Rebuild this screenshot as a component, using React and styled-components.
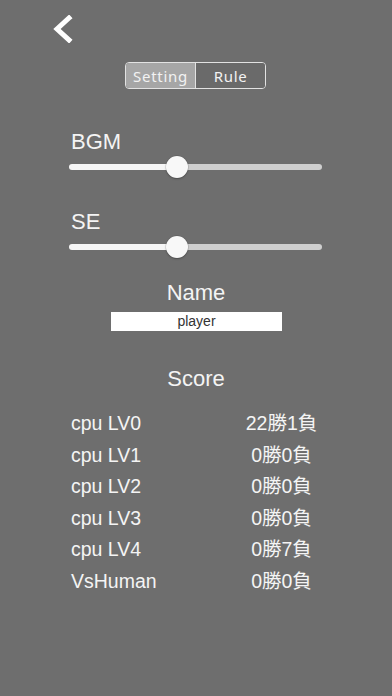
import React from 'react';
import styled, { createGlobalStyle } from 'styled-components';

const GlobalStyle = createGlobalStyle`
  html, body {
    margin: 0;
    padding: 0;
    background: #6e6e6e;
  }
  body {
    font-family: "Liberation Sans", "Noto Sans CJK JP", sans-serif;
    color: #f4f4f4;
  }
`;

const Screen = styled.div`
  width: 392px;
  height: 696px;
  display: flex;
  flex-direction: column;
  box-sizing: border-box;
`;

const BackButton = styled.button`
  align-self: flex-start;
  margin: 15px 0 0 52px;
  padding: 0;
  width: 22px;
  height: 28px;
  border: none;
  background: none;
  display: flex;
`;

const TabBar = styled.div`
  align-self: center;
  margin-top: 19px;
  margin-left: -1px;
  display: flex;
  width: 141px;
  height: 27px;
  border: 1.5px solid #e2e2e2;
  border-radius: 4px;
  box-sizing: border-box;
  overflow: hidden;
`;

const Tab = styled.div`
  flex: 1;
  display: flex;
  align-items: center;
  justify-content: center;
  font-family: "Noto Sans", "Open Sans", sans-serif;
  font-size: 15px;
  letter-spacing: 0.7px;
  color: #f2f2f2;
  background: ${p => (p.$active ? '#a6a6a6' : '#6a6a6a')};
  border-left: ${p => (p.$first ? 'none' : '1.5px solid #e2e2e2')};
`;

const SliderGroup = styled.div`
  display: flex;
  flex-direction: column;
  padding: 0 70px 0 69px;
  margin-top: ${p => p.$top}px;
`;

const Label = styled.div`
  font-size: 22px;
  line-height: 24px;
  padding-left: 2px;
`;

const Slider = styled.div`
  position: relative;
  margin-top: 2px;
  height: 22px;
  display: flex;
  align-items: center;
`;

const Track = styled.div`
  width: 100%;
  height: 6px;
  border-radius: 3px;
  background: linear-gradient(to right, #f6f6f6 0, #f6f6f6 var(--fill), #cfcfcf var(--fill), #cfcfcf 100%);
`;

const Thumb = styled.div`
  position: absolute;
  top: 0;
  width: 22px;
  height: 22px;
  margin-left: -11px;
  border-radius: 50%;
  background: #f8f8f8;
  box-shadow: 0 0 0 0.5px rgba(0, 0, 0, 0.15), 0 1px 2px rgba(0, 0, 0, 0.25);
`;

const Heading = styled.div`
  text-align: center;
  font-size: 22px;
  line-height: 26px;
  margin-top: ${p => p.$top}px;
`;

const NameBox = styled.div`
  align-self: center;
  margin-top: 6px;
  margin-left: 1px;
  width: 171px;
  height: 19px;
  background: #ffffff;
  color: #333333;
  font-size: 14px;
  line-height: 19px;
  text-align: center;
`;

const ScoreList = styled.div`
  margin-top: 16px;
  padding: 0 70px 0 71px;
  display: flex;
  flex-direction: column;
`;

const ScoreRow = styled.div`
  display: grid;
  grid-template-columns: 1fr 100px;
  height: 31.5px;
  line-height: 31.5px;
  font-size: 19.5px;
`;

const Result = styled.span`
  text-align: center;
  margin-right: -19px;
`;

const sliders = [
  { label: 'BGM', value: 0.425, top: 41 },
  { label: 'SE', value: 0.425, top: 32 },
];

const scores = [
  ['cpu LV0', '22勝1負'],
  ['cpu LV1', '0勝0負'],
  ['cpu LV2', '0勝0負'],
  ['cpu LV3', '0勝0負'],
  ['cpu LV4', '0勝7負'],
  ['VsHuman', '0勝0負'],
];

function App() {
  return (
    <Screen>
      <GlobalStyle />
      <BackButton aria-label="back">
        <svg width="22" height="28" viewBox="0 0 22 28">
          <path d="M17 3 L5 14 L17 25" fill="none" stroke="#ffffff" strokeWidth="5" strokeLinecap="square" />
        </svg>
      </BackButton>

      <TabBar>
        <Tab $active $first>Setting</Tab>
        <Tab>Rule</Tab>
      </TabBar>

      {sliders.map(s => (
        <SliderGroup key={s.label} $top={s.top}>
          <Label>{s.label}</Label>
          <Slider>
            <Track style={{ '--fill': `${s.value * 100}%` }} />
            <Thumb style={{ left: `${s.value * 100}%` }} />
          </Slider>
        </SliderGroup>
      ))}

      <Heading $top={22}>Name</Heading>
      <NameBox>player</NameBox>

      <Heading $top={35}>Score</Heading>
      <ScoreList>
        {scores.map(([name, result]) => (
          <ScoreRow key={name}>
            <span>{name}</span>
            <Result>{result}</Result>
          </ScoreRow>
        ))}
      </ScoreList>
    </Screen>
  );
}

export default App;
